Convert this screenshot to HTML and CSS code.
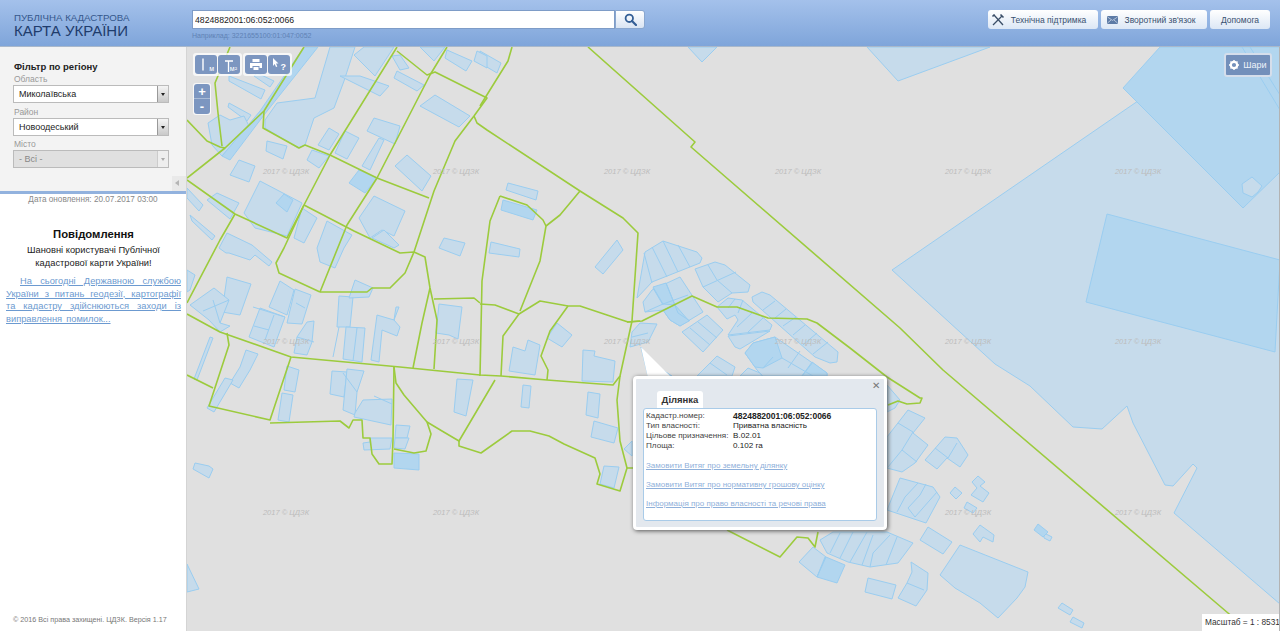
FILE: index.html
```html
<!DOCTYPE html>
<html lang="uk">
<head>
    <meta charset="UTF-8">
    <title>Публічна кадастрова карта України</title>
    <link rel="stylesheet" href="styles.css">
</head>
<body>
    <header class="header">
        <div class="logo">
            <div class="logo-small">ПУБЛІЧНА КАДАСТРОВА</div>
            <div class="logo-big">КАРТА УКРАЇНИ</div>
        </div>
        <div class="search">
            <div class="search-row">
                <input class="search-input" type="text" value="4824882001:06:052:0066">
                <button class="search-btn">
                    <svg width="13" height="13" viewBox="0 0 13 13"><circle cx="5.3" cy="5.3" r="3.7" fill="none" stroke="#345f96" stroke-width="1.8"/><path d="M8 8l4 4" stroke="#345f96" stroke-width="2.2" stroke-linecap="round"/></svg>
                </button>
            </div>
            <div class="search-hint">Наприклад: 3221655100:01:047:0052</div>
        </div>
        <nav class="top-menu">
            <a class="top-btn top-btn-support">
                <svg width="14" height="14" viewBox="0 0 14 14"><path d="M2 12L11 3M3 2l9 10" stroke="#3b4f68" stroke-width="1.3" fill="none"/><path d="M9.5 1.5l3 3M1.5 3.5l2-2" stroke="#3b4f68" stroke-width="1.6"/></svg>
                Технічна підтримка
            </a>
            <a class="top-btn top-btn-feedback">
                <svg width="11" height="8" viewBox="0 0 11 8"><rect width="11" height="8" rx="1" fill="#5d7ba6"/><path d="M0.5 1l5 3.4 5-3.4M0.5 7l3.5-3M10.5 7L7 4" stroke="#dbe5f2" stroke-width="0.7" fill="none"/></svg>
                Зворотний зв'язок
            </a>
            <a class="top-btn top-btn-help">Допомога</a>
        </nav>
    </header>
    <div class="page">
        <aside class="sidebar">
            <div class="filter">
                <h4>Фільтр по регіону</h4>
                <label>Область</label>
                <div class="select">Миколаївська<span class="select-arrow"></span></div>
                <label>Район</label>
                <div class="select">Новоодеський<span class="select-arrow"></span></div>
                <label>Місто</label>
                <div class="select select-off">- Всі -<span class="select-arrow"></span></div>
                <div class="collapse"></div>
            </div>
            <div class="updated">Дата оновлення: 20.07.2017 03:00</div>
            <div class="notice">
                <h3>Повідомлення</h3>
                <p class="notice-hello">Шановні користувачі Публічної кадастрової карти України!</p>
                <p class="notice-text"><a href="#">На сьогодні Державною службою України з питань геодезії, картографії та кадастру здійснюються заходи із виправлення помилок...</a></p>
            </div>
            <div class="copyright">© 2016 Всі права захищені. ЦДЗК. Версія 1.17</div>
        </aside>
        <main class="map">
            <svg class="map-canvas" viewBox="187 47 1093 584" width="1093" height="584">
                <!-- ділянки -->
                <g class="parcel">
                    <polygon points="892,270 1215,48 1280,48 1280,604 1174,513 1197,468 1193,464 1173,486 1165,485 1133,423 1127,406 1102,429 1073,427 1030,386 995,364"/>
                    <polygon points="867,47 898,81 990,47"/>
                    <polygon points="688,47 702,62 717,47"/>
                    <polygon points="480,51 501,63 497,73 480,63"/>
                    <polygon points="265,120 277,103 315,98 330,47 355,47 344,81 334,108 314,118 305,145 298,148 265,128"/>
                    <polygon points="229,76 265,90 261,99 229,81"/>
                    <polygon points="257,73 274,81 270,87 254,76"/>
                    <polygon points="229,103 251,115 247,121 228,107"/>
                    <polygon points="208,123 220,115 230,120 244,116 250,128 232,145 222,156 212,145"/>
                    <polygon points="267,141 287,146 283,159 266,151"/>
                    <polygon points="239,160 255,166 249,182 230,175"/>
                    <polygon points="260,181 302,203 287,236 255,228 244,213"/>
                    <polygon points="329,128 339,134 329,150 318,145"/>
                    <polygon points="345,131 359,138 347,159 335,153"/>
                    <polygon points="312,150 329,156 319,168 307,160"/>
                    <polygon points="374,118 400,126 395,144 367,131"/>
                    <polygon points="379,138 384,140 370,170 362,166"/>
                    <polygon points="407,155 431,176 422,191 395,166"/>
                    <polygon points="435,95 470,116 459,127 420,106"/>
                    <polygon points="397,71 424,85 417,91 394,78"/>
                    <polygon points="392,56 400,55 409,68 400,70"/>
                    <polygon points="360,76 389,86 380,96 354,83 340,76"/>
                    <polygon points="447,50 472,61 466,71 445,58"/>
                    <polygon points="477,51 487,56 487,68 474,61"/>
                    <polygon points="420,47 445,47 434,61"/>
                    <polygon points="364,47 394,47 375,76 354,55"/>
                    <polygon points="187,188 203,205 199,211 187,198"/>
                    <polygon points="207,200 217,193 239,203 230,219"/>
                    <polygon points="190,215 215,236 212,240 192,221"/>
                    <polygon points="359,218 374,196 405,211 394,236 382,230 370,238"/>
                    <polygon points="384,230 399,245 394,248 372,238"/>
                    <polygon points="317,248 327,221 352,235 344,248 335,268 320,262"/>
                    <polygon points="302,208 317,218 304,243 294,238"/>
                    <polygon points="439,248 444,238 465,243 460,256"/>
                    <polygon points="219,248 227,233 252,245 272,262 269,266 255,255 250,260 229,253 226,253"/>
                    <polygon points="187,270 195,275 190,290 187,292"/>
                    <polygon points="227,277 251,284 240,315 222,312"/>
                    <polygon points="190,305 214,288 229,300 220,323 230,326 220,332 209,320"/>
                    <polygon points="280,281 294,290 287,315 269,307"/>
                    <polygon points="260,308 285,317 274,347 249,337"/>
                    <polygon points="295,289 311,295 302,324 287,323"/>
                    <polygon points="307,322 314,321 312,342 307,355 294,353 297,337"/>
                    <polygon points="210,337 213,338 197,380 194,379"/>
                    <polygon points="246,350 258,354 250,370 239,388 230,383 240,367"/>
                    <polygon points="225,378 233,380 214,412 207,408"/>
                    <polygon points="287,366 299,370 295,392 284,390"/>
                    <polygon points="282,393 293,395 289,422 278,420"/>
                    <polygon points="339,296 353,297 350,327 337,327"/>
                    <polygon points="346,327 365,328 362,362 343,359"/>
                    <polygon points="355,280 373,288 369,297 349,298"/>
                    <polygon points="377,315 394,320 396,307 399,307 394,320 400,327 397,336 382,330 379,362 371,360 375,330"/>
                    <polygon points="439,304 462,307 458,339 449,335 436,333"/>
                    <polygon points="332,371 347,372 344,397 330,394"/>
                    <polygon points="347,369 364,371 357,392 355,415 343,410"/>
                    <polygon points="363,400 392,399 391,425 354,417 355,413"/>
                    <polygon points="457,379 473,380 466,416 454,412"/>
                    <polygon points="396,425 410,426 407,438 395,438"/>
                    <polygon points="395,438 409,438 405,449 394,448"/>
                    <polygon points="370,438 392,438 390,449 364,450 363,443 370,442"/>
                    <polygon points="193,469 195,463 209,466 213,469 209,478"/>
                    <polygon points="187,564 199,589 187,592"/>
                    <polygon points="591,437 594,421 618,428 614,443"/>
                    <polygon points="604,466 619,467 614,488 600,484"/>
                    <polygon points="624,449 632,441 632,456"/>
                    <polygon points="588,392 600,394 598,418 586,415"/>
                    <polygon points="523,385 531,386 529,408 521,407"/>
                    <polygon points="508,183 538,191 536,200 506,190"/>
                    <polygon points="491,242 520,249 519,257 489,253"/>
                    <polygon points="617,240 623,250 603,274 595,267"/>
                    <polygon points="557,323 572,335 562,347 547,338"/>
                    <polygon points="513,347 525,351 528,340 540,345 535,375 509,371"/>
                    <polygon points="583,350 595,351 594,356 615,361 613,382 582,381"/>
                    <polygon points="637,298 645,252 663,241 697,252 702,258 700,263 652,282"/>
                    <polygon points="643,302 652,290 680,277 703,312 688,321 680,326 670,320 663,310 645,312"/>
                    <polygon points="695,269 715,262 725,265 750,285 748,292 732,293 718,302 703,287"/>
                    <polygon points="682,332 707,315 723,330 703,352"/>
                    <polygon points="717,307 728,298 742,300 772,325 770,330 728,335 738,320 735,315 727,319"/>
                    <polygon points="728,336 770,331 740,349 735,347"/>
                    <polygon points="752,297 762,292 770,295 838,352 837,362 830,363 815,357 753,302"/>
                    <polygon points="745,353 753,343 775,337 827,373 827,376 763,376 757,370"/>
                    <polygon points="632,332 640,323 657,324 648,342 630,347"/>
                    <polygon points="697,376 717,356 735,367 732,376"/>
                    <polygon points="740,376 748,368 760,373 762,376"/>
                    <polygon points="641,347 650,362 672,376 648,376"/>
                    <polygon points="887,385 900,400 895,408 887,412"/>
                    <polygon points="908,410 925,418 913,433 928,445 915,463 902,472 887,468 887,437"/>
                    <polygon points="925,460 945,437 957,438 968,455 960,467 947,458 937,469"/>
                    <polygon points="900,478 933,487 940,497 926,523 887,510"/>
                    <polygon points="820,540 833,532 887,532 913,543 898,563 870,567 848,562 827,553"/>
                    <polygon points="813,547 826,557 817,577 799,562"/>
                    <polygon points="868,578 896,585 892,599 865,592"/>
                    <polygon points="911,562 928,573 927,590 916,606 898,598 907,583 912,572"/>
                    <polygon points="928,527 952,542 943,554 920,540"/>
                    <polygon points="960,545 1028,572 1025,587 1017,598 998,618 980,603 955,588 940,575"/>
                    <polygon points="955,487 962,493 956,499 950,493"/>
                    <polygon points="978,476 985,482 980,486 989,493 983,502 971,495 977,488 972,482"/>
                    <polygon points="967,502 977,508 973,513 964,508"/>
                    <polygon points="980,525 994,535 993,542 983,537 980,542 973,534"/>
                    <polygon points="1044,533 1052,537 1050,541 1044,538"/>
                    <polygon points="1062,603 1073,610 1070,615 1058,608"/>
                    <polygon points="1073,617 1084,623 1082,628 1070,622"/>
                </g>
                <g class="parcel parcel-dark">
                    <polygon points="1123,88 1160,47 1280,47 1280,172 1243,208"/>
                    <polygon points="1107,214 1280,260 1275,352 1086,302"/>
                    <polygon points="304,47 318,47 264,115 230,160 222,156 260,111"/>
                    <polygon points="276,203 284,194 293,200 287,212"/>
                    <polygon points="349,183 359,170 377,178 365,193"/>
                    <polygon points="503,200 537,210 533,220 501,210"/>
                    <polygon points="394,453 419,454 419,470 394,468"/>
                    <polygon points="653,287 666,283 675,305 663,304"/>
                    <polygon points="663,310 675,305 689,321 680,326 670,320"/>
                    <polygon points="745,353 753,343 775,337 782,358 763,368 755,367"/>
                    <polygon points="812,362 827,373 827,376 802,376"/>
                    <polygon points="826,557 845,565 837,583 817,577"/>
                    <polygon points="1038,524 1048,532 1043,537 1034,530"/>
                </g>
                <polygon class="parcel-line" points="1242,184 1252,177 1262,186 1258,192 1252,197 1243,193"/>
                <!-- межі всередині кварталів -->
                <path class="parcel-line" d="M1242 47L1280 110M1250 47L1280 95
                    M644 253L652 283M652 247L667 277M663 241L678 272M678 245L690 267
                    M653 288L663 305M666 283L678 313L690 321M663 304L688 295M645 312L663 304
                    M708 265L717 280L732 293M703 287L736 272
                    M690 328L710 345M698 322L717 338
                    M743 300L738 313M752 313L737 327M763 318L748 332M735 299L728 308
                    M775 301L763 310M786 309L775 318M796 317L783 326M805 325L793 335M817 333L803 345M828 342L813 354
                    M773 357L763 368M782 358L813 376M800 351L788 368M813 362L802 376
                    M632 337L648 333M710 363L727 375
                    M898 423L913 432L902 450L917 462M902 450L888 467
                    M935 448L948 458L957 443
                    M918 483L905 497L897 512M926 484L920 495L908 508L915 517M937 492L915 517
                    M840 533L830 553M853 532L840 558M867 532L850 562M873 535L862 565M890 535L873 553L870 567M897 537L886 565
                    M825 557L817 577M907 583L924 590
                    M343 373L357 392M374 396L392 404M339 327L333 357M357 328L353 361
                    M253 307L285 317M213 300L220 323M203 311L229 300M274 315L265 340M254 326L269 330M296 303L305 308M297 337L314 342"/>
                <!-- межі кварталів -->
                <g class="road">
                    <polyline points="588,47 695,142 691,147 900,328 943,370 1228,613 1250,631"/>
                    <polyline points="474,116 477,123 487,130 580,191 623,218 638,233 632,321 620,376 613,385 547,380 501,376 480,375 400,367 291,357 220,332 187,314"/>
                    <polyline points="580,191 560,215 546,226"/>
                    <polyline points="500,196 527,205 543,220 546,226 540,261 520,311"/>
                    <polyline points="500,196 490,221 482,281 480,376"/>
                    <polyline points="480,304 495,305 519,314 503,336 501,376"/>
                    <polyline points="519,314 540,301 568,306 580,306 628,322 642,321 692,296 717,307 737,307 768,318 807,319 817,323 850,348 887,377 920,398 922,398 920,403 907,404 898,401 888,405"/>
                    <polyline points="568,306 550,331 541,356 548,370 547,380"/>
                    <polyline points="512,47 508,61 480,106"/>
                    <polyline points="304,47 264,111 225,148 187,178"/>
                    <polyline points="187,120 207,141 220,147 225,148"/>
                    <polyline points="230,47 215,83 218,113 222,146"/>
                    <polyline points="397,47 330,155 304,205 284,248 276,263 279,273 320,292"/>
                    <polyline points="447,47 430,75 377,178 347,225 320,292"/>
                    <polyline points="397,51 427,75 435,72 487,98 474,116 455,141 434,191 414,252 405,273 390,288 372,288 367,292 320,292"/>
                    <polyline points="264,111 263,128 299,148 305,145 330,155 377,178 429,198"/>
                    <polyline points="187,180 235,214 287,238 304,205"/>
                    <polyline points="235,214 220,240 187,303"/>
                    <polyline points="304,205 354,231 400,253 414,252 425,257 430,288 437,320 434,369"/>
                    <polyline points="430,288 422,323 413,368"/>
                    <polyline points="434,299 474,298 480,303"/>
                    <polyline points="227,333 229,345 209,406 270,420 291,357"/>
                    <polyline points="187,375 213,388"/>
                    <polyline points="270,423 340,421 349,428 353,420 362,420 363,438 370,438 372,454 379,464 392,464 393,440 394,367"/>
                    <polyline points="394,449 414,453 426,451 431,434 427,422 404,395 396,383 394,367"/>
                    <polyline points="427,422 442,431 459,441 495,380"/>
                    <polyline points="459,441 459,446 481,453 512,431 530,431 549,436 564,444 595,458 600,474 597,484 620,491 627,468 620,441 617,400 620,376"/>
                    <polyline points="627,468 634,468"/>
                    <polyline points="818,532 815,547 808,538 797,537 780,557 727,530"/>
                    <polyline points="640,321 627,322"/>
                </g>
                <!-- водяні знаки -->
                <g class="wm">
                    <text x="286" y="174">2017 © ЦДЗК</text><text x="456" y="174">2017 © ЦДЗК</text><text x="627" y="174">2017 © ЦДЗК</text><text x="798" y="174">2017 © ЦДЗК</text><text x="968" y="174">2017 © ЦДЗК</text><text x="1138" y="174">2017 © ЦДЗК</text>
                    <text x="286" y="344">2017 © ЦДЗК</text><text x="456" y="344">2017 © ЦДЗК</text><text x="627" y="344">2017 © ЦДЗК</text><text x="798" y="344">2017 © ЦДЗК</text><text x="968" y="344">2017 © ЦДЗК</text><text x="1138" y="344">2017 © ЦДЗК</text>
                    <text x="286" y="515">2017 © ЦДЗК</text><text x="456" y="515">2017 © ЦДЗК</text><text x="968" y="515">2017 © ЦДЗК</text><text x="1138" y="515">2017 © ЦДЗК</text>
                </g>
                <polygon class="popup-tail" points="641,347 648,378 672,378"/>
            </svg>

            <div class="tools">
                <div class="tool-group">
                    <button class="tool"><svg width="20" height="17" viewBox="0 0 20 17"><path d="M7 2.500v12" stroke="#fff" stroke-width="1.4"/></svg><span>м</span></button>
                    <button class="tool"><svg width="20" height="17" viewBox="0 0 20 17"><path d="M6 5h8M9.500 5v11" stroke="#fff" stroke-width="1.3"/></svg><span>м²</span></button>
                </div>
                <div class="tool-group">
                    <button class="tool"><svg width="14" height="13" viewBox="0 0 14 13"><path d="M3.500 1h7v3h-7zM1 5h12v5h-2.500V8h-7v2H1zM4.500 9h5v3h-5z" fill="#fff"/></svg></button>
                    <button class="tool"><svg width="20" height="17" viewBox="0 0 20 17"><path d="M4 2l5.500 5.500H7l1.300 3-1.300.6-1.300-3L4 10z" fill="#fff"/></svg><span class="tool-q">?</span></button>
                </div>
            </div>
            <div class="zoom">
                <button class="zoom-btn">+</button>
                <button class="zoom-btn">-</button>
            </div>
            <button class="layers">
                <svg width="10" height="10" viewBox="0 0 10 10"><circle cx="5" cy="5" r="3.200" fill="none" stroke="#fff" stroke-width="2.200"/><path d="M5 0v2M5 8v2M0 5h2M8 5h2M1.500 1.500l1.400 1.400M7.100 7.100l1.400 1.400M8.500 1.500L7.100 2.900M2.900 7.100L1.500 8.500" stroke="#fff" stroke-width="1.400"/></svg>
                Шари
            </button>

            <div class="popup">
                <div class="popup-close">✕</div>
                <div class="popup-tab">Ділянка</div>
                <div class="popup-body">
                    <div class="info-row"><span class="info-name">Кадастр.номер:</span><b>4824882001:06:052:0066</b></div>
                    <div class="info-row"><span class="info-name">Тип власності:</span>Приватна власність</div>
                    <div class="info-row"><span class="info-name">Цільове призначення:</span>В.02.01</div>
                    <div class="info-row"><span class="info-name">Площа:</span>0.102 га</div>
                    <a class="popup-link" href="#">Замовити Витяг про земельну ділянку</a>
                    <a class="popup-link" href="#">Замовити Витяг про нормативну грошову оцінку</a>
                    <a class="popup-link" href="#">Інформація про право власності та речові права</a>
                </div>
            </div>
            <div class="scale">Масштаб = 1 : 8531</div>
        </main>
    </div>
</body>
</html>
```

FILE: styles.css
```css
html, body {
    margin: 0;
    padding: 0;
    height: 100%;
    overflow: hidden;
}

body {
    display: flex;
    flex-direction: column;
    font-family: "Liberation Sans", Arial, sans-serif;
    font-size: 9px;
    color: #222;
    background-color: #fff;
}

.header {
    height: 46px;
    flex: none;
    display: flex;
    background: linear-gradient(#a4c1eb, #7fa5da);
    border-bottom: 1px solid #a9b8cb;
}

.logo {
    width: 192px;
    flex: none;
    box-sizing: border-box;
    padding: 12px 0 0 14px;
}

.logo-small {
    font-size: 9.7px;
    line-height: 11px;
    color: #35578c;
}

.logo-big {
    font-size: 15px;
    line-height: 15px;
    color: #1f3c6c;
}

.search {
    padding-top: 10px;
}

.search-row {
    display: flex;
}

.search-input {
    width: 423px;
    height: 19px;
    box-sizing: border-box;
    padding: 0 2px;
    border: 1px solid #7e9cc7;
    font-family: "Liberation Sans", Arial, sans-serif;
    font-size: 8.7px;
    color: #222;
    background-color: #fff;
}

.search-btn {
    width: 30px;
    height: 19px;
    margin-left: 0;
    padding: 0;
    border: 1px solid #8aa7cf;
    border-radius: 0 3px 3px 0;
    background: linear-gradient(#fff, #d9e4f3);
    display: flex;
    align-items: center;
    justify-content: center;
}

.search-hint {
    margin-top: 1px;
    font-size: 7px;
    line-height: 11px;
    color: #5f82b5;
}

.top-menu {
    margin-left: auto;
    padding: 10px 10px 0 0;
    display: flex;
    gap: 3px;
}

.top-btn {
    height: 19px;
    box-sizing: border-box;
    display: flex;
    align-items: center;
    justify-content: center;
    gap: 7px;
    font-size: 8.5px;
    color: #38506f;
    background: linear-gradient(#fff, #dce7f5);
    border-radius: 3px;
}

.top-btn-support {
    width: 110px;
    padding-right: 9px;
    gap: 6px;
}

.top-btn-feedback {
    width: 106px;
    padding-right: 6px;
}

.top-btn-help {
    width: 60px;
}

.page {
    flex: 1;
    display: flex;
    min-height: 0;
}

.sidebar {
    width: 187px;
    flex: none;
    display: flex;
    flex-direction: column;
    box-sizing: border-box;
    border-right: 1px solid #d4d4d4;
    background-color: #fff;
}

.filter {
    position: relative;
    height: 147px;
    flex: none;
    box-sizing: border-box;
    padding: 14px 17px 0 13px;
    background-color: #f3f3f3;
    border-bottom: 3px solid #92b2de;
}

.filter h4 {
    margin: 0 0 2px 1px;
    font-size: 9.5px;
    line-height: 11px;
    color: #222;
}

.filter label {
    display: block;
    margin-left: 1px;
    font-size: 8.5px;
    line-height: 11px;
    color: #999;
}

.select {
    position: relative;
    height: 18px;
    margin-bottom: 3.5px;
    box-sizing: border-box;
    padding-left: 5px;
    border: 1px solid #bbb;
    background-color: #fff;
    font-size: 9px;
    line-height: 17px;
    color: #222;
}

.select-arrow {
    position: absolute;
    right: 0;
    top: 0;
    bottom: 0;
    width: 10px;
    border-left: 1px solid #999;
    background: linear-gradient(#f4f4f4, #c9c9c9);
}

.select-arrow::after {
    content: "";
    position: absolute;
    left: 3px;
    top: 7px;
    border: 2px solid transparent;
    border-top: 3px solid #222;
}

.select-off {
    background-color: #e0e0e0;
    color: #888;
}

.select-off .select-arrow {
    background: #eee;
    border-left-color: #ccc;
}

.select-off .select-arrow::after {
    border-top-color: #aaa;
}

.collapse {
    position: absolute;
    right: 0;
    bottom: 0;
    width: 14px;
    height: 15px;
    background-color: #e9e9e9;
}

.collapse::after {
    content: "";
    position: absolute;
    left: 3px;
    top: 4px;
    border: 3px solid transparent;
    border-right: 4px solid #b5b5b5;
    border-left: 0;
}

.updated {
    text-align: center;
    font-size: 8.2px;
    line-height: 11px;
    color: #888;
}

.notice {
    padding: 22px 5px 0 6px;
}

.notice h3 {
    margin: 0 0 3px;
    text-align: center;
    font-size: 11.3px;
    line-height: 14px;
    color: #111;
}

.notice-hello {
    margin: 0 0 5px;
    text-align: center;
    font-size: 9.3px;
    line-height: 13px;
    color: #222;
}

.notice-text {
    margin: 0;
    text-align: justify;
    text-indent: 14px;
    font-size: 9.3px;
    line-height: 12.6px;
    word-spacing: 1.5px;
}

.notice-text a {
    color: #6c9ad0;
}

.copyright {
    margin-top: auto;
    padding: 0 0 6px 13px;
    font-size: 7.2px;
    line-height: 10px;
    color: #777;
}

.map {
    position: relative;
    flex: 1;
    overflow: hidden;
    box-sizing: border-box;
    border-right: 1px solid #b3b3b3;
    background-color: #e0e0e0;
}

.map-canvas {
    position: absolute;
    left: 0;
    top: 0;
    display: block;
}

.parcel polygon {
    fill: #c6dbeb;
    stroke: #9acdf0;
    stroke-width: 1;
}

.parcel-dark polygon {
    fill: #b2d6ef;
}

.parcel-line {
    fill: #c6dbeb;
    stroke: #9acdf0;
    stroke-width: 1;
}

path.parcel-line {
    fill: none;
}

.road polyline {
    fill: none;
    stroke: #9ccb3d;
    stroke-width: 1.6;
    stroke-linejoin: round;
}

.wm text {
    font-family: "Liberation Sans", Arial, sans-serif;
    font-size: 7.5px;
    font-style: italic;
    text-anchor: middle;
    fill: #bcbcbc;
}

.popup-tail {
    fill: #fff;
}

.tools {
    position: absolute;
    left: 6px;
    top: 6px;
    display: flex;
    gap: 1px;
}

.tool-group {
    display: flex;
    padding: 2px;
    gap: 1px;
    background-color: rgba(255, 255, 255, 0.75);
    border-radius: 3px;
}

.tool {
    position: relative;
    width: 22px;
    height: 19px;
    padding: 0;
    border: 0;
    border-radius: 3px;
    display: flex;
    align-items: center;
    justify-content: center;
    background-color: #7c96c0;
    color: #fff;
    font-size: 7px;
}

.tool span {
    position: absolute;
    right: 3px;
    bottom: 2px;
}

.tool .tool-q {
    right: 4px;
    bottom: 2px;
    font-size: 9px;
    font-weight: bold;
}

.zoom {
    position: absolute;
    left: 6px;
    top: 36px;
    width: 18px;
    padding: 1px;
    box-sizing: border-box;
    background-color: rgba(255, 255, 255, 0.75);
    border-radius: 3px;
}

.zoom-btn {
    display: block;
    width: 16px;
    height: 15px;
    padding: 0;
    border: 0;
    background-color: #7c96c0;
    color: #fff;
    font-family: "Liberation Sans", Arial, sans-serif;
    font-size: 13px;
    line-height: 13px;
    font-weight: bold;
}

.zoom-btn:first-child {
    border-radius: 3px 3px 0 0;
    border-bottom: 1px solid #a9bbd6;
}

.zoom-btn:last-child {
    border-radius: 0 0 3px 3px;
}

.layers {
    position: absolute;
    right: 7px;
    top: 6px;
    width: 48px;
    height: 24px;
    padding: 0;
    box-sizing: border-box;
    display: flex;
    align-items: center;
    justify-content: center;
    gap: 4px;
    border: 2px solid rgba(255, 255, 255, 0.7);
    border-radius: 3px;
    background-color: #7390bb;
    color: #eef3fa;
    font-family: "Liberation Sans", Arial, sans-serif;
    font-size: 9px;
}

.popup {
    position: absolute;
    left: 446px;
    top: 329px;
    width: 254px;
    height: 154px;
    box-sizing: border-box;
    padding: 12px 7px 0;
    background-color: #e3e8ee;
    border: 3px solid #fff;
    border-radius: 4px;
    box-shadow: 1px 1px 4px #555;
}

.popup-close {
    position: absolute;
    right: 4px;
    top: 1px;
    font-size: 10px;
    line-height: 11px;
    color: #777;
}

.popup-tab {
    width: 46px;
    height: 17px;
    margin-left: 14px;
    box-sizing: border-box;
    text-align: center;
    font-size: 9.5px;
    font-weight: bold;
    line-height: 17px;
    color: #333;
    background-color: #fff;
    border-radius: 3px 3px 0 0;
}

.popup-body {
    height: 113px;
    box-sizing: border-box;
    padding: 2px;
    background-color: #fff;
    border: 1px solid #a9cbe8;
    border-radius: 3px;
}

.info-row {
    display: flex;
    font-size: 8.1px;
    line-height: 10px;
    color: #222;
}

.info-row b {
    font-size: 8.5px;
}

.info-name {
    width: 87px;
    flex: none;
    color: #444;
}

.popup-link {
    display: block;
    margin-top: 9px;
    font-size: 8px;
    line-height: 10px;
    color: #8fb0da;
}

.info-row + .popup-link {
    margin-top: 10px;
}

.scale {
    position: absolute;
    right: 0;
    bottom: 0;
    width: 77px;
    height: 17px;
    padding-left: 3px;
    box-sizing: border-box;
    white-space: nowrap;
    font-size: 8.3px;
    line-height: 17px;
    color: #333;
    background-color: #fff;
}
```
